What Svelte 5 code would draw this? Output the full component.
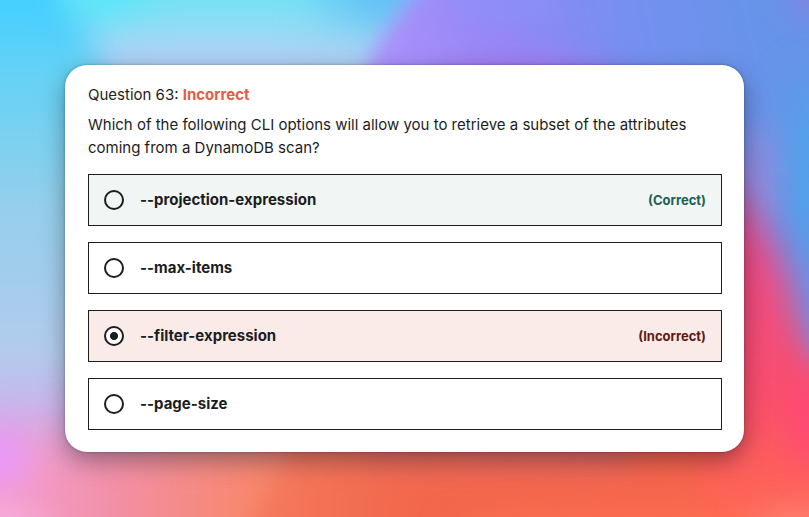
<script>
  const options = [
    { id: 'projection', label: '--projection-expression', state: 'correct', note: '(Correct)' },
    { id: 'max', label: '--max-items', state: '', note: '' },
    { id: 'filter', label: '--filter-expression', state: 'incorrect', note: '(Incorrect)' },
    { id: 'page', label: '--page-size', state: '', note: '' }
  ];
  let selected = $state('filter');
</script>

<div class="page">
  <svg class="wallpaper" viewBox="0 0 809 517" preserveAspectRatio="none" aria-hidden="true">
    <defs>
      <filter id="wide" x="-100%" y="-100%" width="300%" height="300%" color-interpolation-filters="sRGB"><feGaussianBlur stdDeviation="26" /></filter>
      <filter id="mid" x="-100%" y="-100%" width="300%" height="300%" color-interpolation-filters="sRGB"><feGaussianBlur stdDeviation="17" /></filter>
      <filter id="tight" x="-30%" y="-30%" width="160%" height="160%" color-interpolation-filters="sRGB"><feGaussianBlur stdDeviation="10" /></filter>
      <linearGradient id="left" x1="0" y1="0" x2="0" y2="1">
        <stop offset="0" stop-color="#45cfff" />
        <stop offset=".15" stop-color="#66d2f5" />
        <stop offset=".4" stop-color="#94cfec" />
        <stop offset=".68" stop-color="#b3cbec" />
        <stop offset=".8" stop-color="#cbb4ec" />
        <stop offset="1" stop-color="#ee9ade" />
      </linearGradient>
      <linearGradient id="sky" gradientUnits="userSpaceOnUse" x1="0" y1="0" x2="0" y2="70">
        <stop offset="0" stop-color="#6ee3f5" />
        <stop offset=".45" stop-color="#9adcf6" />
        <stop offset="1" stop-color="#b7caf4" />
      </linearGradient>
      <linearGradient id="violet" gradientUnits="userSpaceOnUse" x1="400" y1="90" x2="760" y2="10">
        <stop offset="0" stop-color="#a990fa" />
        <stop offset=".3" stop-color="#9488f6" />
        <stop offset=".65" stop-color="#7590f0" />
        <stop offset="1" stop-color="#6694e9" />
      </linearGradient>
      <linearGradient id="floor" gradientUnits="userSpaceOnUse" x1="0" y1="0" x2="809" y2="0">
        <stop offset="0" stop-color="#f3a0d4" />
        <stop offset=".14" stop-color="#f28fa6" />
        <stop offset=".32" stop-color="#f88769" />
        <stop offset=".5" stop-color="#f3694e" />
        <stop offset=".85" stop-color="#fb644f" />
        <stop offset="1" stop-color="#ff5c6c" />
      </linearGradient>
      <linearGradient id="rose" gradientUnits="userSpaceOnUse" x1="0" y1="180" x2="0" y2="517">
        <stop offset="0" stop-color="#d25ba4" />
        <stop offset=".25" stop-color="#ed4b84" />
        <stop offset=".65" stop-color="#fb4f6c" />
        <stop offset="1" stop-color="#ff6b53" />
      </linearGradient>
    </defs>
    <rect width="809" height="517" fill="url(#left)" />
    <path d="M40-60L85 20 112 100 100 160 450 160 450-60Z" fill="url(#sky)" filter="url(#mid)" />
    <ellipse cx="105" cy="-8" rx="45" ry="22" fill="#5ae6f9" filter="url(#mid)" />
    <ellipse cx="385" cy="-8" rx="60" ry="28" fill="#5eb2f6" filter="url(#wide)" />
    <path d="M442-40C406 8 376 32 366 75L366 560 900 560 900-40Z" fill="url(#violet)" filter="url(#tight)" />
    <ellipse cx="520" cy="84" rx="90" ry="20" fill="#ad74ef" filter="url(#mid)" />
    <ellipse cx="500" cy="0" rx="60" ry="10" fill="#8b95fa" filter="url(#mid)" />
    <ellipse cx="758" cy="175" rx="20" ry="50" fill="#9a8bdc" filter="url(#mid)" />
    <ellipse cx="822" cy="170" rx="24" ry="85" fill="#46abe9" filter="url(#wide)" />
    <ellipse cx="815" cy="-5" rx="24" ry="18" fill="#917bdb" filter="url(#mid)" />
    <path d="M690 165C755 185 778 240 795 300C808 350 820 380 870 400L900 620 600 620Z" fill="url(#rose)" filter="url(#mid)" />
    <path d="M-120 458Q60 435 170 430L680 440 740 500 940 540 940 660-120 660Z" fill="url(#floor)" filter="url(#wide)" />
    <path d="M292 420C284 478 262 505 232 550L700 550 700 420Z" fill="#f0674c" opacity=".4" filter="url(#tight)" />
    <ellipse cx="640" cy="535" rx="190" ry="20" fill="#ff7250" filter="url(#mid)" />
    <ellipse cx="814" cy="415" rx="22" ry="50" fill="#ff4877" filter="url(#mid)" />
    <ellipse cx="809" cy="530" rx="60" ry="20" fill="#ff8474" filter="url(#mid)" />
    <ellipse cx="-4" cy="458" rx="30" ry="28" fill="#ea96ff" filter="url(#mid)" />
    <ellipse cx="0" cy="530" rx="45" ry="18" fill="#fbb2de" filter="url(#mid)" />
  </svg>

  <main class="card">
    <form>
      <h1>Question 63: <strong>Incorrect</strong></h1>
      <p id="question">Which of the following CLI options will allow you to retrieve a subset of the attributes coming from a DynamoDB scan?</p>
      <div class="options" role="radiogroup" aria-labelledby="question">
        {#each options as option}
          <label class="option {option.state}" for={option.id}>
            <input type="radio" id={option.id} name="answer" value={option.id} bind:group={selected} />
            <span class="name">{option.label}</span>
            {#if option.note}<span class="note">{option.note}</span>{/if}
          </label>
        {/each}
      </div>
    </form>
  </main>
</div>

<style>
  .page {
    display: grid;
    min-height: 100vh;
    overflow: hidden;
    font-family: Inter, "Liberation Sans", sans-serif;
    color: #1c1d1f;
  }
  .wallpaper {
    grid-area: 1 / 1;
    width: 100%;
    height: 100%;
    min-height: 0;
    contain: size;
  }
  .card {
    grid-area: 1 / 1;
    z-index: 1;
    align-self: center;
    box-sizing: border-box;
    margin: 0 65px;
    padding: 18px 22px 22px 23px;
    border-radius: 22px;
    background: #fff;
    box-shadow: 0 9px 24px rgba(0, 0, 0, .36), 0 0 3px rgba(0, 0, 0, .3);
  }
  h1 {
    margin: 0 0 7px;
    font-size: 15px;
    line-height: 23px;
    font-weight: 400;
  }
  h1 strong {
    font-weight: 700;
    color: #e55d42;
  }
  p {
    margin: 0 0 15px;
    font-size: 15px;
    line-height: 23px;
  }
  .options {
    display: grid;
    gap: 16px;
  }
  .option {
    display: flex;
    align-items: center;
    gap: 16px;
    box-sizing: border-box;
    min-height: 52px;
    padding: 0 15px;
    border: 1px solid #1c1d1f;
    cursor: pointer;
  }
  .correct {
    background: #f1f5f4;
  }
  .incorrect {
    background: #fbebe8;
  }
  input {
    appearance: none;
    flex: none;
    box-sizing: border-box;
    width: 20px;
    height: 20px;
    margin: 0;
    border: 2px solid #1c1d1f;
    border-radius: 50%;
  }
  input:checked {
    background: radial-gradient(circle, #1c1d1f 3.6px, #fff 4.4px);
  }
  .name {
    flex: 1;
    font-size: 15px;
    line-height: 20px;
    font-weight: 700;
  }
  .note {
    font-size: 13px;
    line-height: 20px;
    font-weight: 700;
  }
  .correct .note {
    color: #1e6055;
  }
  .incorrect .note {
    color: #611a11;
  }
</style>
